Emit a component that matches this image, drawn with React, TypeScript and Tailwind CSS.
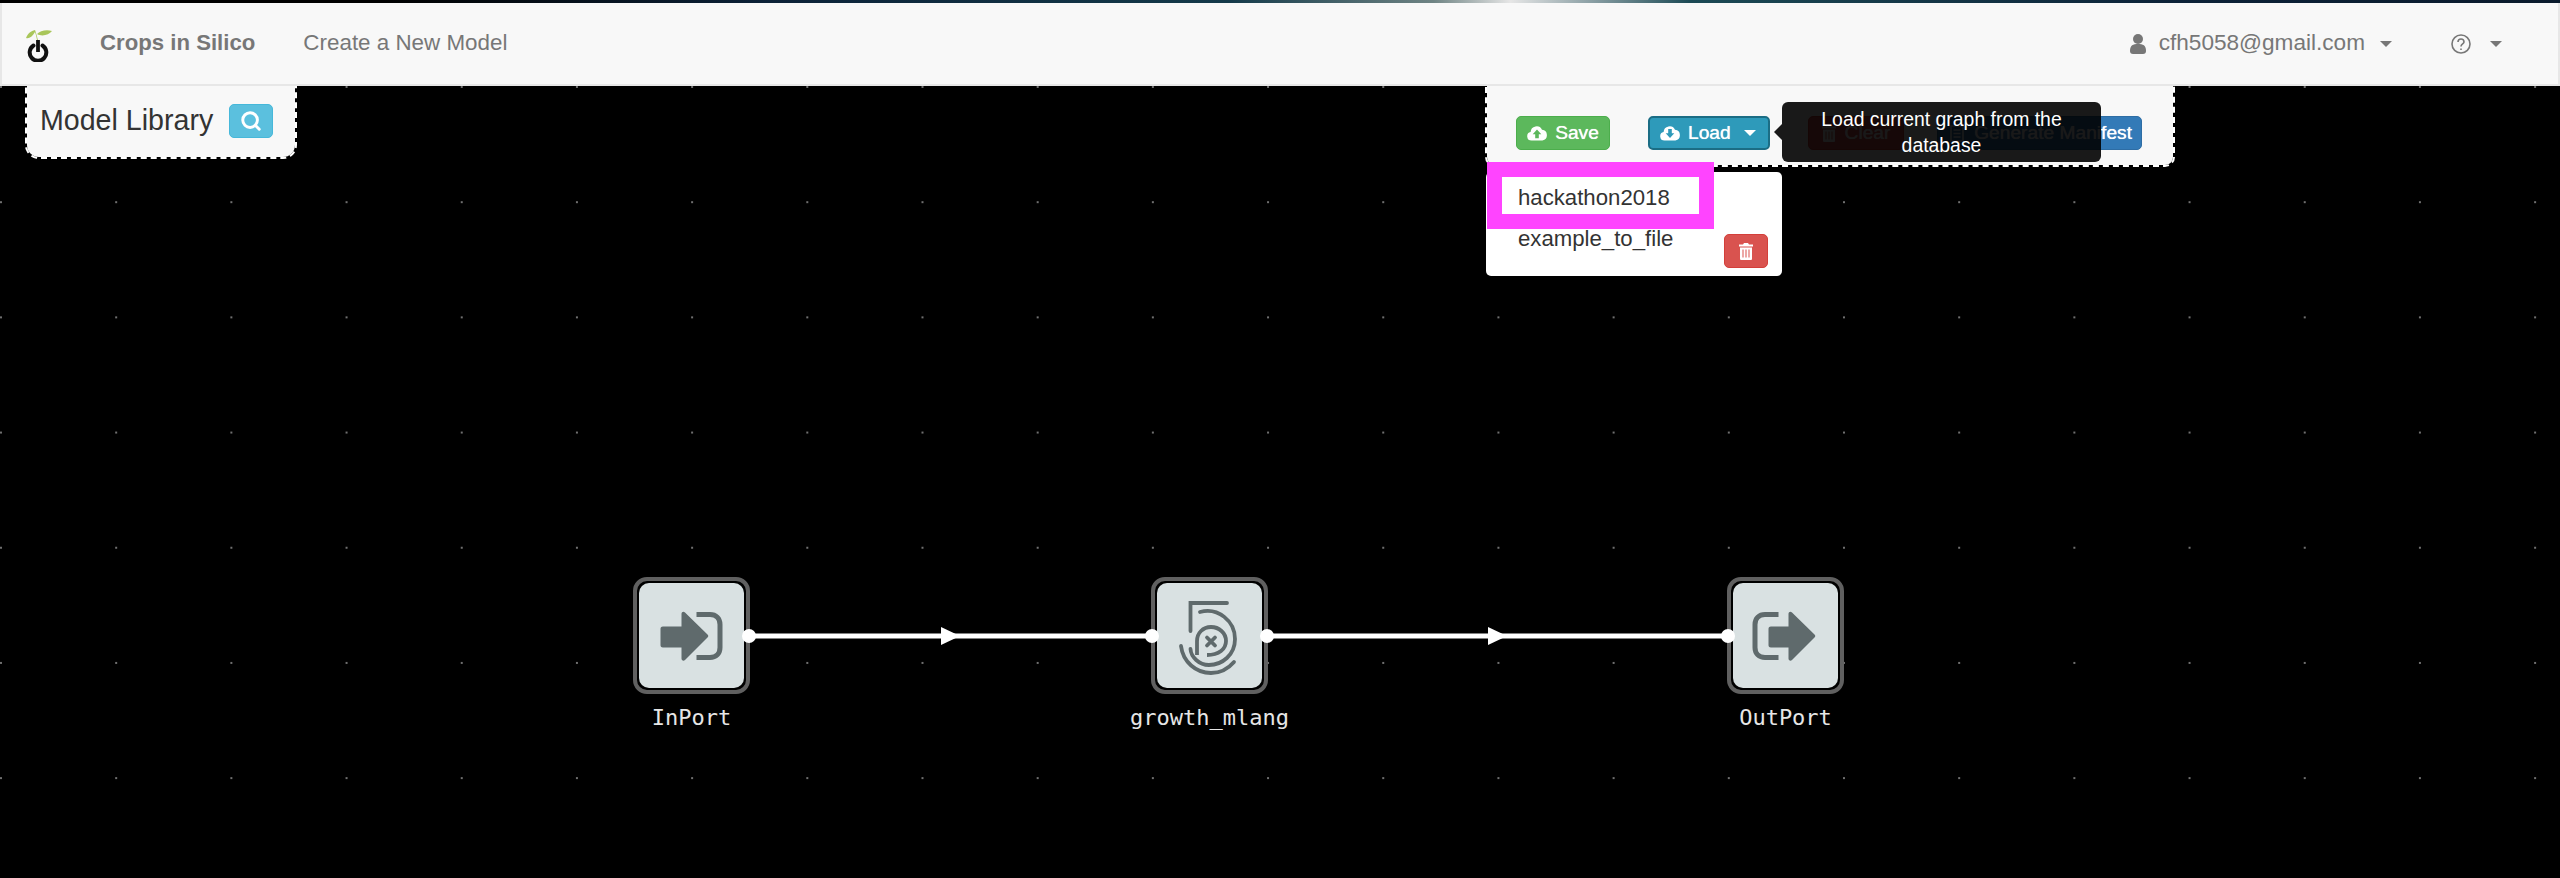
import { Search } from "lucide-react";

const sans = "font-['Liberation_Sans',Arial,sans-serif]";

function Caret({ className }: { className: string }) {
  return <span className={`inline-block h-0 w-0 border-x-[6.5px] border-t-[6.5px] border-x-transparent ${className}`} />;
}

function CloudIcon({ up, tone }: { up: boolean; tone: string }) {
  return (
    <svg viewBox="0 0 20 16" className="h-[16px] w-[20px] shrink-0" fill="white">
      <path d="M4.500 15.500a4.300 4.300 0 0 1-.9-8.500A6 6 0 0 1 15 4.800a5.400 5.400 0 0 1 .4 10.700z" />
      {up ? (
        <path d="M10 4.500l4.300 4.700h-2.500v4H8.200v-4H5.700z" fill={tone} />
      ) : (
        <path d="M8.200 4h3.600v4.200h2.500L10 13 5.700 8.200h2.500z" fill={tone} />
      )}
    </svg>
  );
}

function TrashIcon({ fill, slot }: { fill: string; slot: string }) {
  return (
    <svg viewBox="0 0 14 17" className="h-[17px] w-[14px] shrink-0" fill={fill}>
      <path d="M5 0h4l1 1.500h4V3.500H0V1.500h4z" />
      <path d="M1 4.500h12V15.500c0 1-.5 1.500-1.500 1.500h-9C1.500 17 1 16.500 1 15.500z" />
      <path d="M3.500 6.500h1v8h-1zM6.500 6.500h1v8h-1zM9.500 6.500h1v8h-1z" fill={slot} />
    </svg>
  );
}

function Logo() {
  return (
    <svg viewBox="0 0 30 36" className="h-[36px] w-[30px]">
      <path d="M14 14C13 10 11.500 5 11 4 7 5 4 7 2 12c3 1 6-1 9-6 1 3 1.500 5 2 8z" fill="#a9c65a" />
      <path d="M13 8c3-3 9-5 15-3-3 4-10 6-15 3z" fill="#a9c65a" />
      <path d="M9.500 19.500a8.300 8.300 0 1 0 9 0" fill="none" stroke="#111" strokeWidth="4" strokeLinecap="round" />
      <path d="M14 14v12" stroke="#111" strokeWidth="3.800" />
    </svg>
  );
}

function InPortIcon() {
  return (
    <svg viewBox="0 0 64 52" className="h-[52px] w-[64px]" fill="#5f6a6c">
      <path d="M3 16.500h18.500V4c0-2 2-3 3.500-1.500L47.500 24.500c1 1 1 2 0 3L25 50c-1.500 1.500-3.500.5-3.500-1.500v-11H3c-2 0-2.500-1-2.500-2.500V19c0-1.500.5-2.500 2.500-2.500z" />
      <path d="M36.500 4.500H50c6 0 10 4 10 10v23c0 6-4 10-10 10H36.500" fill="none" stroke="#5f6a6c" strokeWidth="5" />
    </svg>
  );
}

function OutPortIcon() {
  return (
    <svg viewBox="-2 0 68 52" className="h-[52px] w-[68px]" fill="#5f6a6c">
      <path d="M17 16.500h17.500V4c0-2 2-3 3.500-1.500L60.500 24.500c1 1 1 2 0 3L38 50c-1.500 1.500-3.500.5-3.500-1.500v-11H17c-2 0-2.500-1-2.500-2.500V19c0-1.500.5-2.500 2.500-2.500z" />
      <path d="M24.500 4.500H11c-6 0-10 4-10 10v23c0 6 4 10 10 10h13.500" fill="none" stroke="#5f6a6c" strokeWidth="5" />
    </svg>
  );
}

function FiveIcon() {
  return (
    <svg viewBox="1175 595 70 80" className="h-[80px] w-[70px]" fill="none" stroke="#5f6a6c" strokeWidth="3.800">
      <path d="M1227 602H1190.500V630" strokeLinecap="round" />
      <path d="M1200 611C1218 606 1235 620 1235 638C1235 654 1222 664 1209 664C1199 664 1191 656 1190.500 648" strokeLinecap="round" />
      <path d="M1197 654V640C1197 632 1203 626 1211 626C1219 626 1226 632 1226 640C1226 648 1219 654 1207 654" />
      <path d="M1181 645C1183 661 1196 672 1211 672C1220 672 1228 668 1234 661" strokeLinecap="round" />
      <path d="M1207 636.500l8 8M1215 636.500l-8 8" strokeLinecap="round" />
    </svg>
  );
}

function Node({ x, label, icon, ports }: { x: number; label: string; icon: React.ReactNode; ports: ("l" | "r")[] }) {
  return (
    <div className="absolute top-[491px] h-[117px] w-[117px]" style={{ left: x }}>
      <div className="flex h-full w-full items-center justify-center rounded-[14px] border-4 border-[#606060] bg-black p-[2px]">
        <div className="flex h-full w-full items-center justify-center rounded-[10px] bg-[#d9e1e2]">{icon}</div>
      </div>
      {ports.includes("l") && <span className="absolute left-[-6px] top-[52px] h-[14px] w-[14px] rounded-full bg-white" />}
      {ports.includes("r") && <span className="absolute right-[-6px] top-[52px] h-[14px] w-[14px] rounded-full bg-white" />}
      <div className="absolute left-1/2 top-[126px] -translate-x-1/2 whitespace-nowrap font-['DejaVu_Sans_Mono',monospace] text-[22px] leading-[30px] text-[#e6e6e6]">
        {label}
      </div>
    </div>
  );
}

export default function App() {
  return (
    <div className={`${sans} flex h-[878px] w-[2560px] flex-col overflow-hidden bg-black`}>
      <div className="h-[3px] shrink-0 bg-[linear-gradient(90deg,#000_0%,#000_15%,#0c2238_30%,#143a4a_48%,#6f8484_56%,#e6e6e6_59%,#1c4a55_66%,#0c2238_85%,#0a1a2c_100%)]" />
      <nav className="relative z-20 flex h-[83px] shrink-0 items-center border-x-2 border-b-2 border-[#e7e7e7] bg-[#f8f8f8] text-[#777]">
        <div className="ml-[22px] w-[30px]"><Logo /></div>
        <span className="ml-[46px] text-[22.2px] font-bold leading-none">Crops in Silico</span>
        <span className="ml-[48px] text-[22.4px] leading-none">Create a New Model</span>
        <div className="ml-auto flex items-center">
          <svg viewBox="0 0 16 20" className="h-[20px] w-[16px]" fill="#777">
            <circle cx="8" cy="5" r="5" />
            <path d="M0 17c0-6 3-7 8-7s8 1 8 7c0 2-1 3-3 3H3c-2 0-3-1-3-3z" />
          </svg>
          <span className="ml-[13px] text-[22.6px] leading-none">cfh5058@gmail.com</span>
          <Caret className="ml-[15px] border-t-[#777]" />
          <svg viewBox="0 0 20 20" className="ml-[59px] h-[20px] w-[20px]" fill="none" stroke="#777" strokeWidth="1.600">
            <circle cx="10" cy="10" r="9" />
            <path d="M7 8c0-4 6-4 6 0 0 2-3 2-3 4.500" />
            <path d="M10 14.500v1.500" />
          </svg>
          <Caret className="ml-[19px] mr-[56px] border-t-[#777]" />
        </div>
      </nav>

      <main className="relative flex-1 bg-black bg-[radial-gradient(circle_at_1px_1px,#707070_1px,transparent_1.500px)] bg-[size:115.2px_115.2px]">
        <div className="absolute left-[25px] top-[-4px] flex h-[77px] w-[272px] items-center rounded-b-[14px] border-2 border-dashed border-white bg-[#f8f8f8] bg-clip-padding pl-[13px]">
          <span className="text-[28.6px] leading-none text-[#333]">Model Library</span>
          <span className="ml-[16px] flex h-[34px] w-[44px] items-center justify-center rounded-[5px] border border-[#46b8da] bg-[#5bc0de]">
            <Search className="h-[22px] w-[22px] text-white" strokeWidth={3.2} />
          </span>
        </div>

        <div className="absolute left-[1485px] top-[-4px] flex h-[85px] w-[690px] items-start rounded-b-[10px] border-2 border-dashed border-white bg-[#f8f8f8] bg-clip-padding pl-[29px] pt-[32px] text-[19.2px] text-white [text-shadow:0_0_0.7px_white]">
          <span className="flex h-[34px] w-[94px] items-center justify-center gap-[8px] rounded-[5px] border border-[#4cae4c] bg-[#5cb85c]">
            <CloudIcon up tone="#5cb85c" /> Save
          </span>
          <span className="ml-[38px] flex h-[34px] w-[122px] items-center gap-[8px] rounded-[5px] border-2 border-[#1b6d85] bg-[#2e9aba] pl-[10px]">
            <CloudIcon up={false} tone="#2e9aba" /> Load <Caret className="ml-[5px] border-x-[6px] border-t-[6px] border-t-white" />
          </span>
          <span className="ml-[38px] flex h-[34px] w-[96px] items-center justify-center gap-[9px] rounded-[5px] border border-[#d43f3a] bg-[#d9534f]">
            <TrashIcon fill="white" slot="#d9534f" /> Clear
          </span>
          <span className="ml-[33px] flex h-[34px] w-[205px] items-center justify-end gap-[10px] rounded-[5px] border border-[#2e6da4] bg-[#337ab7] pr-[9px]">
            <svg viewBox="0 0 14 17" className="h-[17px] w-[14px]" fill="none" stroke="white" strokeWidth="1.600">
              <path d="M1 1h12v15H1zM3.500 5h7M3.500 8.500h7M3.500 12h7" />
            </svg>
            Generate Manifest
          </span>
        </div>

        <div className="absolute left-[1782px] top-[16px] flex h-[60px] w-[319px] items-center justify-center rounded-[6px] bg-black/90 px-[30px] text-center text-[19.4px] leading-[26px] text-white">
          <span className="absolute left-[-8px] top-[22px] h-0 w-0 border-y-[8px] border-r-[8px] border-y-transparent border-r-black/90" />
          Load current graph from the database
        </div>

        <div className="absolute left-[1486px] top-[86px] h-[104px] w-[296px] rounded-[5px] bg-white text-[22.2px] leading-none text-[#333]">
          <span className="absolute left-[1px] top-[-10px] flex h-[67px] w-[227px] items-center border-[15px] border-[#ff44ff] bg-white pl-[16px] pt-[6px]">hackathon2018</span>
          <span className="absolute left-[32px] top-[56px]">example_to_file</span>
          <span className="absolute left-[238px] top-[62px] flex h-[34px] w-[44px] items-center justify-center rounded-[5px] border border-[#d43f3a] bg-[#d9534f]">
            <TrashIcon fill="white" slot="#d9534f" />
          </span>
        </div>

        <svg className="absolute left-0 top-0 h-full w-full" viewBox="0 0 2560 792" fill="white" stroke="none">
          <rect x="750" y="547.500" width="402" height="5" />
          <rect x="1267" y="547.500" width="461" height="5" />
          <path d="M941 541l19 9-19 9z" />
          <path d="M1488 541l19 9-19 9z" />
        </svg>

        <Node x={633} label="InPort" icon={<InPortIcon />} ports={["r"]} />
        <Node x={1151} label="growth_mlang" icon={<FiveIcon />} ports={["l", "r"]} />
        <Node x={1727} label="OutPort" icon={<OutPortIcon />} ports={["l"]} />
      </main>
    </div>
  );
}
